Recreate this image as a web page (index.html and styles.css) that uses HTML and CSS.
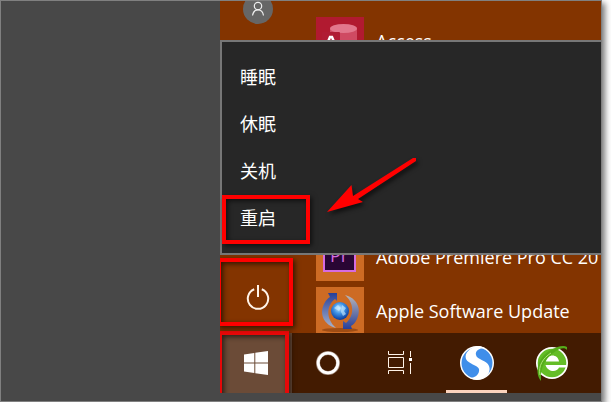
FILE: index.html
```
<!DOCTYPE html>
<html lang="zh-CN">

<head>
  <meta charset="utf-8">
  <title>重启</title>
  <link rel="stylesheet" href="styles.css">
</head>

<body>
  <div class="frame">
    <div class="desktop">
      <div class="start-menu">
        <div class="rail">
          <button class="rail-btn user" aria-label="User">
            <svg width="30" height="30" viewBox="0 0 30 30">
              <circle cx="15" cy="15" r="15" fill="#666"/>
              <g fill="none" stroke="#eee" stroke-width="1.2">
                <circle cx="15" cy="12" r="3.7"/>
                <path d="M9.5 21.5c.6-3.700 2.600-5.600 5.500-5.600s4.900 1.900 5.500 5.600"/>
              </g>
            </svg>
          </button>
          <button class="rail-btn power" aria-label="Power">
            <svg width="24" height="26" viewBox="0 0 24 26" fill="none" stroke="#fff3e8" stroke-width="2">
              <path d="M8.200 5.200a10.200 10.200 0 1 0 7.600 0M12 1v12"/>
            </svg>
          </button>
        </div>

        <ul class="apps">
          <li class="app">
            <svg class="tile" viewBox="0 0 48 48">
              <rect width="48" height="48" fill="#b11a30"/>
              <path d="M14 12v24c0 6 27 6 27 0V12z" fill="#cf4a62"/>
              <ellipse cx="27.500" cy="11.500" rx="13.500" ry="4.500" fill="#e2778c"/>
              <rect x="6" y="15" width="18" height="20" rx="1" fill="#b01c34"/>
              <path d="M9 32l5-12h2l5 12M11 28h8" fill="none" stroke="#fff" stroke-width="2.500"/>
            </svg>
            <span>Access</span>
          </li>
          <li class="app premiere">
            <svg class="tile" viewBox="0 0 48 48">
              <rect width="48" height="48" fill="#cd6b24"/>
              <rect x="8" y="6" width="31" height="32" fill="#2a0634" stroke="#d66be0" stroke-width="2"/>
              <text x="14" y="29" class="pr">Pr</text>
            </svg>
            <span>Adobe Premiere Pro CC 20</span>
          </li>
          <li class="app apple">
            <svg class="tile" viewBox="0 0 48 48">
              <defs>
                <radialGradient id="globe" cx=".45" cy=".35" r=".65">
                  <stop offset="0" stop-color="#bfe6ff"/>
                  <stop offset=".45" stop-color="#3f93e6"/>
                  <stop offset="1" stop-color="#0b3a9a"/>
                </radialGradient>
                <linearGradient id="up" x1="0" y1="0" x2="0" y2="1">
                  <stop offset="0" stop-color="#263f9a"/>
                  <stop offset="1" stop-color="#a6b2cb"/>
                </linearGradient>
                <linearGradient id="down" x1="0" y1="0" x2="0" y2="1">
                  <stop offset="0" stop-color="#b8b5b8"/>
                  <stop offset="1" stop-color="#263f9a"/>
                </linearGradient>
              </defs>
              <rect width="48" height="48" fill="#cd6b24"/>
              <ellipse cx="24" cy="43" rx="18" ry="2" fill="#9f4c13"/>
              <path d="M20 41C8 38 3 27 8 17c2-4 4-6 6-7l-2-4h9v8l-2-2c-8 6-10 19 1 29z" fill="url(#up)"/>
              <path d="M29 8c12 3 17 14 12 24-2 4-4 6-6 7l1 3h-9v-8l3 2c8-7 9-19-1-28z" fill="url(#down)"/>
              <circle cx="24" cy="24" r="9" fill="url(#globe)"/>
              <path d="M18 21l4-3 3 3-2 3zM26 18l4 3-2 3 2 3-3 2-2-4z" fill="#d2f0ff" opacity=".6"/>
            </svg>
            <span>Apple Software Update</span>
          </li>
        </ul>

        <div class="power-menu">
          <button>睡眠</button>
          <button>休眠</button>
          <button>关机</button>
          <button>重启</button>
        </div>
      </div>

      <div class="taskbar">
        <button class="task start" aria-label="Start">
          <svg width="24" height="24" viewBox="0 0 24 24" fill="#fff">
            <path d="M0 3.500L10.300 2v9.500H0zM11.300 1.800L24 0v11.500H11.300zM0 12.500h10.300V22L0 20.500zM11.300 12.500H24V24l-12.700-1.800z"/>
          </svg>
        </button>
        <button class="task" aria-label="Cortana">
          <svg width="24" height="24" viewBox="0 0 24 24">
            <circle cx="12" cy="12" r="10" fill="none" stroke="#a68f82" stroke-width="4"/>
            <circle cx="12" cy="12" r="9.800" fill="none" stroke="#fff" stroke-width="2.800"/>
          </svg>
        </button>
        <button class="task" aria-label="Task view">
          <svg width="24" height="24" viewBox="0 0 24 24" fill="none" stroke="#fff3e8">
            <path d="M.5 0v3.500h15V0M.5 6.500h15v10H.5zM.5 23v-3.500h15V23M22.500 0v6M22.500 12v11"/>
            <path d="M21 7h3v3h-3z" fill="#fff" stroke="none"/>
          </svg>
        </button>
        <div class="pinned">
          <button class="task active" aria-label="Sogou browser">
            <svg width="36" height="36" viewBox="0 0 36 36">
              <circle cx="18" cy="18" r="17" fill="#fff"/>
              <circle cx="18" cy="18" r="15.500" fill="#3f8eea"/>
              <path d="M20 1C11 2 5 8 7 14c2 5 12 6 13 10 1 5-4 9-9 9 4 2 8 2 11 1 7-2 10-8 8-13-2-6-12-6-13-11-1-4 3-7 9-7-2-1-4-2-6-2z" fill="#fff"/>
            </svg>
          </button>
          <button class="task" aria-label="Browser">
            <svg width="36" height="36" viewBox="0 0 36 36">
              <circle cx="18" cy="18" r="16" fill="#fff"/>
              <circle cx="18" cy="18" r="14.300" fill="#64bd27"/>
              <path d="M12 16.500c1-8 12-8 13 0zM11.500 20H33v2.500h-8c-2 5-11 5-13.500-2.500z" fill="#fff"/>
              <path d="M7 36C0 27 4 13 15 6 23 1 30 0 33 2v3c-2-3-7-2-11 1C11 13 6 22 7 36z" fill="#55ad1b"/>
              <path d="M6 30C4 21 9 13 17 8" fill="none" stroke="#aee574"/>
            </svg>
          </button>
        </div>
      </div>

      <!-- step marks -->
      <div class="mark mark-start"></div>
      <div class="mark mark-power"></div>
      <div class="mark mark-restart"></div>
      <svg class="arrow" width="94" height="58" viewBox="0 0 94 58" fill="#f00">
        <path d="M89 1h3v3L34 42l5 3-36 10 24.500-27 1.500 11z"/>
      </svg>
    </div>
  </div>
</body>

</html>
```
FILE: styles.css
```
* { box-sizing: border-box; }

body {
  margin: 0;
  background-color: white;
  color: white;
  font-family: "Open Sans", "Noto Sans CJK SC", sans-serif;
  font-size: 18px;
  overflow: hidden;
}

button {
  border: 0;
  padding: 0;
  background: none;
  color: inherit;
  font: inherit;
}

svg { display: block; }

.frame {
  height: calc(100vh - 9px);
  margin-right: 9px;
  padding: 0 0 8px 219px;
  background-color: #484848;
  border: 1px solid #808080;
  box-shadow: 3px 3px 6px #777;
}

.desktop {
  position: relative;
  height: 100%;
  display: flex;
  flex-direction: column;
  overflow: hidden;
  background-color: #833400;
}

.start-menu {
  position: relative;
  flex: 1;
  min-height: 0;
  display: flex;
  overflow: hidden;
}

.rail {
  width: 76px;
  display: flex;
  flex-direction: column;
  justify-content: space-between;
}

.rail-btn {
  display: flex;
  align-items: center;
  justify-content: center;
}

.user {
  height: 48px;
  margin-top: -16px;
}

.power { height: 72px; }

.apps {
  flex: 1;
  min-width: 0;
  margin: 0;
  padding: 16px 0 0 20px;
  display: grid;
  grid-auto-rows: 48px;
  row-gap: 6px;
  list-style: none;
}

.app {
  display: flex;
  align-items: center;
  gap: 12px;
  white-space: nowrap;
}

/* rows 2 to 4 are under the power menu */
.premiere { grid-row: 5; }

.apple { grid-row: 6; }

.tile {
  flex: none;
  width: 48px;
  height: 48px;
}

.pr { fill: #d66be0; }

.power-menu {
  position: absolute;
  top: 39px;
  left: 0;
  right: 0;
  padding: 10px 0 13px;
  display: flex;
  flex-direction: column;
  background-color: #272727;
  border: 2px solid #777;
  border-right: 0;
}

.power-menu button {
  height: 47px;
  padding-left: 18px;
  text-align: left;
}

.taskbar {
  height: 60px;
  display: flex;
  background-color: #431b01;
}

.task {
  width: 72px;
  display: flex;
  align-items: center;
  justify-content: center;
}

.start { background-color: #6b4b37; }

.pinned {
  display: flex;
  margin-left: 3px;
}

.pinned .task { width: 75px; }

.active {
  background: linear-gradient(#fbd3bd, #fbd3bd) center bottom / 61px 3px no-repeat;
}

.mark {
  position: absolute;
  border: 4px solid #f00;
  box-shadow: 2px 2px 5px rgba(0, 0, 0, .6), inset 2px 2px 5px rgba(0, 0, 0, .6);
}

.mark-restart {
  top: 194px;
  left: 2px;
  width: 88px;
  height: 49px;
}

.mark-power {
  top: 257px;
  left: -3px;
  width: 76px;
  height: 68px;
}

.mark-start {
  top: 330px;
  left: -2px;
  width: 71px;
  height: 70px;
  border-color: #e60808;
}

.arrow {
  position: absolute;
  top: 156px;
  left: 104px;
  overflow: visible;
  filter: drop-shadow(2px 3px 2px rgba(0, 0, 0, .6));
}
```
